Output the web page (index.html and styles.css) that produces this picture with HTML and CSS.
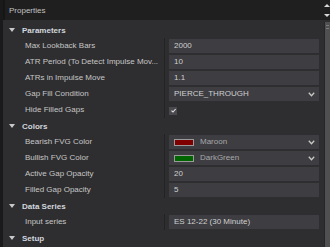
FILE: index.html
```html
<!DOCTYPE html>
<html>
<head>
    <title>Properties</title>
    <link rel="stylesheet" href="styles.css">
</head>
<body>
    <div class="panel">
        <div class="title-bar">
            <span class="title">Properties</span>
            <div class="arrows">
                <span class="arrow-up"></span>
                <span class="arrow-down"></span>
            </div>
        </div>
        <div class="body">
            <div class="list">
                <div class="section"><span class="caret"></span>Parameters</div>
                <div class="row">
                    <div class="label">Max Lookback Bars</div>
                    <div class="value"><div class="box">2000</div></div>
                </div>
                <div class="row">
                    <div class="label" title="ATR Period (To Detect Impulse Move)">ATR Period (To Detect Impulse Mov...</div>
                    <div class="value"><div class="box">10</div></div>
                </div>
                <div class="row">
                    <div class="label">ATRs in Impulse Move</div>
                    <div class="value"><div class="box">1.1</div></div>
                </div>
                <div class="row">
                    <div class="label">Gap Fill Condition</div>
                    <div class="value">
                        <div class="box select">PIERCE_THROUGH
                            <svg class="chev" width="7" height="5" viewBox="0 0 7 5"><polyline points="0.8,0.8 3.5,3.8 6.2,0.8" fill="none" stroke="#c8c8c8" stroke-width="1.3"/></svg>
                        </div>
                    </div>
                </div>
                <div class="row">
                    <div class="label">Hide Filled Gaps</div>
                    <div class="value">
                        <span class="check"><svg width="7" height="7" viewBox="0 0 7 7"><polyline points="1.5,3.6 3,5 5.6,2" fill="none" stroke="#e6e6e6" stroke-width="1.1"/></svg></span>
                    </div>
                </div>

                <div class="section"><span class="caret"></span>Colors</div>
                <div class="row">
                    <div class="label">Bearish FVG Color</div>
                    <div class="value">
                        <div class="box select"><span class="swatch maroon"></span><span class="swatch-name">Maroon</span>
                            <svg class="chev" width="7" height="5" viewBox="0 0 7 5"><polyline points="0.8,0.8 3.5,3.8 6.2,0.8" fill="none" stroke="#c8c8c8" stroke-width="1.3"/></svg>
                        </div>
                    </div>
                </div>
                <div class="row">
                    <div class="label">Bullish FVG Color</div>
                    <div class="value">
                        <div class="box select"><span class="swatch green"></span><span class="swatch-name">DarkGreen</span>
                            <svg class="chev" width="7" height="5" viewBox="0 0 7 5"><polyline points="0.8,0.8 3.5,3.8 6.2,0.8" fill="none" stroke="#c8c8c8" stroke-width="1.3"/></svg>
                        </div>
                    </div>
                </div>
                <div class="row">
                    <div class="label">Active Gap Opacity</div>
                    <div class="value"><div class="box">20</div></div>
                </div>
                <div class="row">
                    <div class="label">Filled Gap Opacity</div>
                    <div class="value"><div class="box">5</div></div>
                </div>

                <div class="section"><span class="caret"></span>Data Series</div>
                <div class="row">
                    <div class="label">Input series</div>
                    <div class="value"><div class="box">ES 12-22 (30 Minute)</div></div>
                </div>

                <div class="section"><span class="caret"></span>Setup</div>
            </div>
            <div class="scrollbar"><span class="grip"></span></div>
        </div>
    </div>
</body>
</html>
```

FILE: styles.css
```css
html, body {
    margin: 0;
    padding: 0;
    background-color: #1a1a1b;
}

body {
    font-family: "Liberation Sans", Arial, sans-serif;
    font-size: 8px;
    color: #c6c6c6;
    overflow: hidden;
}

.panel {
    width: 330px;
    height: 247px;
    padding-left: 3px;
    box-sizing: border-box;
    display: flex;
    flex-direction: column;
}

.title-bar {
    height: 20px;
    background-color: #1f1f20;
    display: flex;
    align-items: center;
    justify-content: space-between;
    padding-left: 4px;
    border-left: 2px solid #161616;
}

.title {
    color: #c2c2c2;
}

.arrows {
    width: 5px;
    height: 20px;
    display: flex;
    flex-direction: column;
    justify-content: space-around;
    align-items: flex-end;
}

.arrow-up {
    width: 0;
    height: 0;
    border-left: 3px solid transparent;
    border-right: 3px solid transparent;
    border-bottom: 3px solid #d8d8d8;
}

.arrow-down {
    width: 0;
    height: 0;
    border-left: 3px solid transparent;
    border-right: 3px solid transparent;
    border-top: 3px solid #d8d8d8;
}

.body {
    flex: 1;
    display: flex;
    background-color: #2e2e30;
    padding-top: 2px;
}

.list {
    flex: 1;
}

.section {
    height: 16px;
    display: flex;
    align-items: center;
    font-weight: bold;
    color: #d2d6de;
    padding-left: 6px;
}

.caret {
    width: 0;
    height: 0;
    border-left: 3px solid transparent;
    border-right: 3px solid transparent;
    border-top: 4px solid #c8c8c8;
    margin-right: 7px;
}

.row {
    height: 16px;
    display: flex;
}

.label {
    width: 139px;
    padding-left: 22px;
    border-right: 1px solid #232325;
    line-height: 16px;
    white-space: nowrap;
    overflow: hidden;
    text-overflow: ellipsis;
}

.value {
    flex: 1;
    padding: 1px 5px 1px 4px;
    display: flex;
    align-items: center;
}

.box {
    flex: 1;
    height: 14px;
    background-color: #3d3d42;
    color: #d0d0d0;
    line-height: 14px;
    padding-left: 5px;
    display: flex;
    align-items: center;
    white-space: nowrap;
}

.select {
    padding-right: 4px;
}

.chev {
    margin-left: auto;
}

.check {
    width: 8px;
    height: 8px;
    background-color: #4a4a4e;
    display: flex;
    align-items: center;
    justify-content: center;
    margin-top: 1px;
}

.swatch {
    width: 18px;
    height: 5px;
    border: 1px solid #9a9a9a;
    margin-right: 6px;
}

.maroon {
    background-color: #800000;
}

.green {
    background-color: #006400;
}

.swatch-name {
    color: #a9a9a9;
}

.scrollbar {
    width: 5px;
    border-left: 1px solid #262627;
    background-color: #505052;
    display: flex;
    justify-content: center;
}

.grip {
    width: 3px;
    height: 2px;
    margin-top: 3px;
    border-top: 1px solid #7a7a7a;
    border-bottom: 1px solid #7a7a7a;
}
```
